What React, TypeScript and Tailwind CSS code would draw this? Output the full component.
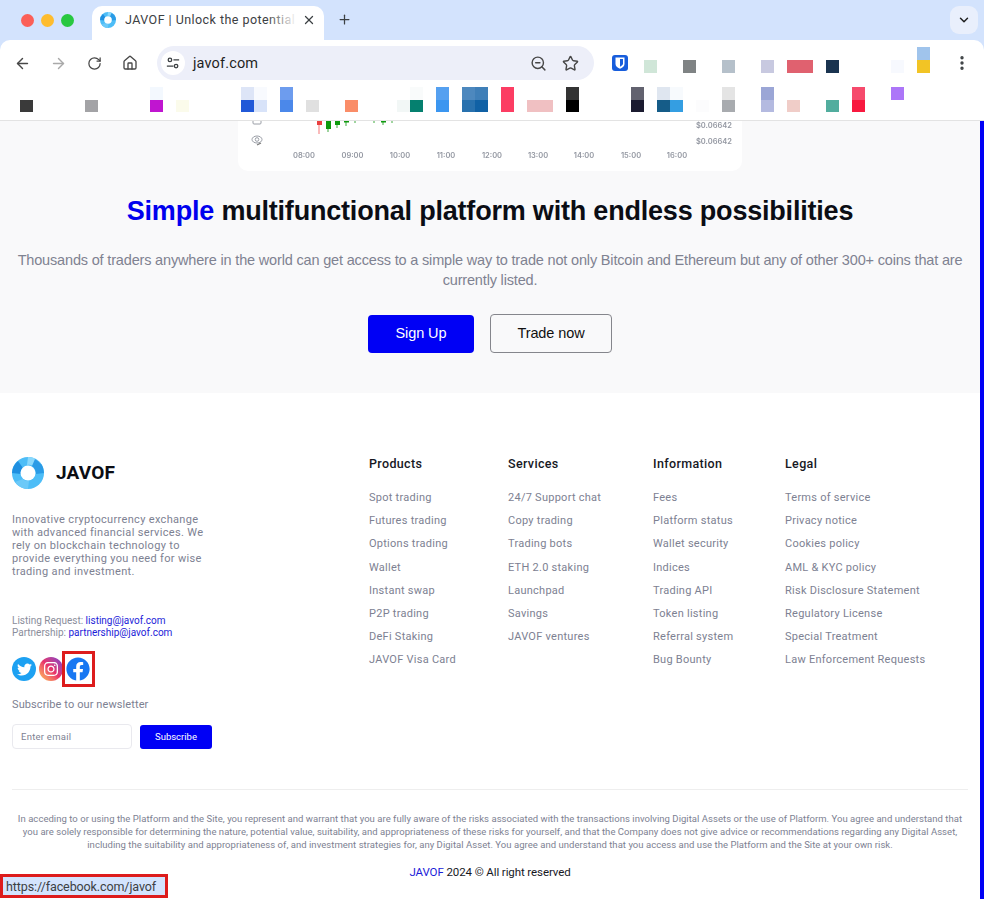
import { ArrowLeft, ArrowRight, RotateCw, House, ZoomOut, Star, ChevronDown, X, Plus, EllipsisVertical } from "lucide-react";
import { FaTwitter, FaFacebook, FaInstagram } from "react-icons/fa";

const extensionTiles = [
  { cls: "ml-[16px] w-[13px]", top: "", bottom: "bg-[#d0e6d8]" },
  { cls: "ml-[26px] w-[13px]", top: "", bottom: "bg-[#7f8384]" },
  { cls: "ml-[26px] w-[13px]", top: "", bottom: "bg-[#b5c0ca]" },
  { cls: "ml-[26px] w-[13px]", top: "", bottom: "bg-[#c8c9e0]" },
  { cls: "ml-[13px] w-[26px]", top: "", bottom: "bg-[#e0616f]" },
  { cls: "ml-[13px] w-[13px]", top: "", bottom: "bg-[#1a3450]" },
  { cls: "ml-[52px] w-[13px]", top: "", bottom: "bg-[#f7f9fe]" },
  { cls: "ml-[13px] w-[13px]", top: "bg-[#a0c4ec]", bottom: "bg-[#f2c425]" },
];

const bookmarkTiles = [
  { cls: "ml-[20px] w-[13px]", top: "", bottom: "bg-[#3a3a3a]" },
  { cls: "ml-[52px] w-[13px]", top: "", bottom: "bg-[#a3a3a6]" },
  { cls: "ml-[52px] w-[13px]", top: "bg-[#f3f8fe]", bottom: "bg-[#c015d0]" },
  { cls: "ml-[13px] w-[13px]", top: "", bottom: "bg-[#fbfbeb]" },
  { cls: "ml-[52px] w-[13px]", top: "bg-[#dde5f7]", bottom: "bg-[#2159d8]" },
  { cls: "w-[13px]", top: "bg-[#f8fafe]", bottom: "bg-[#d8e3f9]" },
  { cls: "ml-[13px] w-[13px]", top: "bg-[#6d9cee]", bottom: "bg-[#4b88ea]" },
  { cls: "ml-[13px] w-[13px]", top: "", bottom: "bg-[#e0e0e0]" },
  { cls: "ml-[26px] w-[13px]", top: "", bottom: "bg-[#fa8d68]" },
  { cls: "ml-[39px] w-[13px]", top: "", bottom: "bg-[#f2f7f6]" },
  { cls: "w-[13px]", top: "bg-[#f9fbfb]", bottom: "bg-[#05806f]" },
  { cls: "ml-[13px] w-[13px]", top: "bg-[#55a0f0]", bottom: "bg-[#3b96f0]" },
  { cls: "ml-[13px] w-[13px]", top: "bg-[#4d88be]", bottom: "bg-[#2871ae]" },
  { cls: "w-[13px]", top: "bg-[#3f7fb8]", bottom: "bg-[#1061a5]" },
  { cls: "ml-[13px] w-[13px]", top: "bg-[#fc3d63]", bottom: "bg-[#fc3d63]" },
  { cls: "ml-[13px] w-[26px]", top: "", bottom: "bg-[#f0c0c2]" },
  { cls: "ml-[13px] w-[13px]", top: "bg-[#333333]", bottom: "bg-black" },
  { cls: "ml-[52px] w-[13px]", top: "bg-[#62626f]", bottom: "bg-[#1b1b30]" },
  { cls: "ml-[13px] w-[13px]", top: "bg-[#dfe6f0]", bottom: "bg-[#155c88]" },
  { cls: "w-[13px]", top: "bg-[#f7fafd]", bottom: "bg-[#349ee2]" },
  { cls: "ml-[13px] w-[13px]", top: "", bottom: "bg-[#fcfcfd]" },
  { cls: "ml-[13px] w-[13px]", top: "bg-[#e4e4e4]", bottom: "bg-[#a8abaf]" },
  { cls: "ml-[26px] w-[13px]", top: "bg-[#9ba6d6]", bottom: "bg-[#b4bae0]" },
  { cls: "ml-[13px] w-[13px]", top: "", bottom: "bg-[#f0cdc8]" },
  { cls: "ml-[26px] w-[13px]", top: "", bottom: "bg-[#52ad9e]" },
  { cls: "ml-[13px] w-[13px]", top: "bg-[#f64a6c]", bottom: "bg-[#f8193f]" },
  { cls: "ml-[26px] w-[13px]", top: "bg-[#ac76f8]", bottom: "" },
];

const footerColumns = [
  {
    title: "Products",
    width: "w-[139px]",
    links: ["Spot trading", "Futures trading", "Options trading", "Wallet", "Instant swap", "P2P trading", "DeFi Staking", "JAVOF Visa Card"],
  },
  {
    title: "Services",
    width: "w-[145px]",
    links: ["24/7 Support chat", "Copy trading", "Trading bots", "ETH 2.0 staking", "Launchpad", "Savings", "JAVOF ventures"],
  },
  {
    title: "Information",
    width: "w-[132px]",
    links: ["Fees", "Platform status", "Wallet security", "Indices", "Trading API", "Token listing", "Referral system", "Bug Bounty"],
  },
  {
    title: "Legal",
    width: "w-[183px]",
    links: ["Terms of service", "Privacy notice", "Cookies policy", "AML & KYC policy", "Risk Disclosure Statement", "Regulatory License", "Special Treatment", "Law Enforcement Requests"],
  },
];

function Tile({ tile, height }: { tile: { cls: string; top: string; bottom: string }; height: string }) {
  return (
    <div className={`flex shrink-0 flex-col ${tile.cls}`}>
      <div className={`${height} ${tile.top}`} />
      <div className={`${height} ${tile.bottom}`} />
    </div>
  );
}

function JavofLogo({ className }: { className: string }) {
  return (
    <svg viewBox="0 0 32 32" className={className}>
      <circle cx="16" cy="16" r="16" fill="#4dbdf7" />
      <path d="M16 0a16 16 0 0 1 14 8l-7 3c-2-3-5-4-8-3z" fill="#8ad8fc" />
      <path d="M23 2a16 16 0 0 1 9 14l-8 1c0-3-1-6-4-8z" fill="#2a9be6" />
      <path d="M0 16a16 16 0 0 1 6-12l5 7c-2 2-3 4-2 6z" fill="#1f8fe0" />
      <path d="M16 32a16 16 0 0 1-13-7l8-3c2 2 3 2 6 2z" fill="#6cc9f8" />
      <circle cx="16" cy="16" r="7.500" fill="#fff" />
    </svg>
  );
}

function BrowserChrome() {
  return (
    <div className="h-[121px] shrink-0 border-b border-[#e3e3e3] bg-[#d3e3fd]">
      <div className="flex h-[40px] items-end">
        <div className="mb-[13px] ml-[21px] flex gap-[7px]">
          <span className="h-[13px] w-[13px] rounded-full bg-[#fb5f57]" />
          <span className="h-[13px] w-[13px] rounded-full bg-[#febc2e]" />
          <span className="h-[13px] w-[13px] rounded-full bg-[#28c840]" />
        </div>
        <div className="relative ml-[18px] flex h-[34px] w-[232px] items-center rounded-t-[10px] bg-white pb-[6px] pl-[8px]">
          <JavofLogo className="h-[16px] w-[16px]" />
          <div className="relative ml-[9px] w-[172px] overflow-hidden whitespace-nowrap font-['Roboto',sans-serif] text-[12.5px] tracking-[0.45px] text-[#3c4043]">
            JAVOF | Unlock the potential of
            <div className="absolute inset-y-0 right-0 w-[30px] bg-gradient-to-r from-transparent to-white" />
          </div>
          <X className="ml-[5px] h-[14px] w-[14px] text-[#3c4043]" strokeWidth={2.2} />
        </div>
        <Plus className="mb-[13px] ml-[13px] h-[15px] w-[15px] text-[#3c4043]" strokeWidth={2} />
        <div className="mb-[6px] ml-auto mr-[6px] flex h-[28px] w-[28px] items-center justify-center rounded-[9px] bg-[#e9effc]">
          <ChevronDown className="h-[14px] w-[14px] text-[#1f1f1f]" strokeWidth={2.5} />
        </div>
      </div>
      <div className="h-[80px] rounded-t-[10px] bg-white">
        <div className="flex h-[46px] items-center pl-[4px]">
          <div className="flex h-[36px] w-[36px] items-center justify-center"><ArrowLeft className="h-[17px] w-[17px] text-[#474747]" strokeWidth={2} /></div>
          <div className="flex h-[36px] w-[36px] items-center justify-center"><ArrowRight className="h-[17px] w-[17px] text-[#a9a9a9]" strokeWidth={2} /></div>
          <div className="flex h-[36px] w-[36px] items-center justify-center"><RotateCw className="h-[15px] w-[15px] text-[#474747]" strokeWidth={2} /></div>
          <div className="flex h-[36px] w-[36px] items-center justify-center"><House className="h-[16px] w-[16px] text-[#474747]" strokeWidth={2} /></div>
          <div className="ml-[9px] flex h-[34px] w-[437px] items-center rounded-full bg-[#edeff9] pl-[4px] pr-[15px]">
            <div className="flex h-[24px] w-[24px] items-center justify-center rounded-full bg-white">
              <svg viewBox="0 0 16 16" className="h-[14px] w-[14px]" fill="none" stroke="#3c4043" strokeWidth="1.5">
                <circle cx="4.5" cy="4.5" r="2" />
                <path d="M8.5 4.5H15M1 11.5h7.5" />
                <circle cx="11.5" cy="11.5" r="2" />
              </svg>
            </div>
            <span className="ml-[8px] pt-[1px] font-['Roboto',sans-serif] text-[14.5px] tracking-[0.15px] text-[#1f1f1f]">javof.com</span>
            <ZoomOut className="ml-auto h-[17px] w-[17px] text-[#474747]" strokeWidth={2} />
            <Star className="ml-[15px] h-[17px] w-[17px] text-[#474747]" strokeWidth={2} />
          </div>
          <svg viewBox="0 0 16 16" className="ml-[18px] h-[16px] w-[16px] shrink-0">
            <rect width="16" height="16" rx="3" fill="#175ddc" />
            <path d="M3.5 2.5h9v6.5c0 2.5-2.5 3.8-4.5 4.7C6 12.8 3.5 11.500 3.500 9z" fill="#fff" />
            <path d="M8 4v7.800c1.500-.8 3-1.700 3-3.200V4z" fill="#175ddc" />
          </svg>
          <div className="flex self-start pt-[7px]">
            {extensionTiles.map((tile, i) => (
              <Tile key={i} tile={tile} height="h-[13px]" />
            ))}
          </div>
          <EllipsisVertical className="ml-[23px] h-[18px] w-[18px] text-[#3c4043]" strokeWidth={2.5} />
        </div>
        <div className="flex pt-[1px]">
          {bookmarkTiles.map((tile, i) => (
            <Tile key={i} tile={tile} height="h-[12.5px]" />
          ))}
        </div>
      </div>
    </div>
  );
}

function ChartPeek() {
  return (
    <div className="mx-auto h-[50px] w-[504px] overflow-hidden rounded-b-[10px] bg-white">
      <svg viewBox="0 0 504 50" className="h-[50px] w-[504px] blur-[0.3px]">
        <path d="M81 0v13" stroke="#f9a5a5" strokeWidth="1.500" />
        <rect x="79" y="0" width="5" height="4" fill="#ea3f3f" />
        <path d="M90 0v11M99 0v7M108 0v5M117 0v2M136 0v2M145 0v4M154 0v2" stroke="#3fa93f" strokeWidth="1" />
        <rect x="88" y="0" width="5" height="8" fill="#0d9a0d" />
        <rect x="97" y="0" width="5" height="4" fill="#0d9a0d" />
        <rect x="106" y="0" width="5" height="1.500" fill="#0d9a0d" />
        <rect x="143" y="0" width="5" height="1.500" fill="#0d9a0d" />
        <ellipse cx="19" cy="18.500" rx="5" ry="3.500" fill="none" stroke="#9a9ea6" strokeWidth="1" />
        <circle cx="19" cy="18.500" r="1.800" fill="none" stroke="#9a9ea6" strokeWidth="1" />
        <path d="M19 24l4-2" stroke="#777" strokeWidth="1.200" />
        <rect x="15" y="-4" width="8" height="7" rx="1" fill="none" stroke="#9a9ea6" strokeWidth="1" />
        <g fontFamily="Inter, sans-serif" fontSize="7.500" fontWeight="600" fill="#9498a2" textAnchor="middle">
          <text x="66" y="37">08:00</text>
          <text x="114.500" y="37">09:00</text>
          <text x="162" y="37">10:00</text>
          <text x="208" y="37">11:00</text>
          <text x="254" y="37">12:00</text>
          <text x="300" y="37">13:00</text>
          <text x="346" y="37">14:00</text>
          <text x="393" y="37">15:00</text>
          <text x="439" y="37">16:00</text>
          <text x="494" y="7" textAnchor="end">$0.06642</text>
          <text x="494" y="23" textAnchor="end">$0.06642</text>
        </g>
      </svg>
    </div>
  );
}

function Hero() {
  return (
    <section className="h-[272px] shrink-0 bg-[#f9f9fa] font-['Liberation_Sans',sans-serif]">
      <ChartPeek />
      <h1 className="mt-[22px] text-center text-[27px] font-bold leading-[36px] tracking-[-0.2px] text-[#0b0d14]">
        <span className="text-[#0000ee]">Simple</span> multifunctional platform with endless possibilities
      </h1>
      <p className="mx-auto mt-[21px] w-[960px] text-center text-[14.5px] leading-[20px] tracking-[-0.17px] text-[#7f8291]">
        Thousands of traders anywhere in the world can get access to a simple way to trade not only Bitcoin and Ethereum but any of other 300+ coins that are currently listed.
      </p>
      <div className="mt-[24px] flex items-center justify-center gap-[16px]">
        <button className="h-[38px] w-[106px] rounded-[4px] bg-[#0000f5] text-[14.5px] tracking-[-0.1px] text-white">Sign Up</button>
        <button className="h-[39px] w-[122px] rounded-[4px] border border-[#85868c] text-[14.5px] tracking-[-0.1px] text-[#111]">Trade now</button>
      </div>
    </section>
  );
}

function Footer() {
  return (
    <footer className="relative flex-1 bg-white px-[12px] font-['Roboto',sans-serif]">
      <div className="flex border-b border-[#eeeeee] pb-[40px] pt-[64px]">
        <div className="w-[357px] shrink-0">
          <div className="flex items-center gap-[12px]">
            <JavofLogo className="h-[32px] w-[32px]" />
            <span className="text-[19px] font-bold tracking-[0.2px] text-[#0b0d14]">JAVOF</span>
          </div>
          <p className="mt-[24px] w-[200px] text-[11px] leading-[13px] tracking-[0.33px] text-[#7d8192]">
            Innovative cryptocurrency exchange with advanced financial services. We rely on blockchain technology to provide everything you need for wise trading and investment.
          </p>
          <div className="mt-[37px] text-[10px] leading-[12px] text-[#8a8d9b]">
            <div>Listing Request: <a className="text-[#1c1cd8]">listing@javof.com</a></div>
            <div>Partnership: <a className="text-[#1c1cd8]">partnership@javof.com</a></div>
          </div>
          <div className="mt-[18px] flex gap-[3px]">
            <div className="flex h-[24px] w-[24px] items-center justify-center rounded-full bg-[#1da1f2]">
              <FaTwitter className="h-[15px] w-[15px] text-white" />
            </div>
            <div className="flex h-[24px] w-[24px] items-center justify-center rounded-full bg-gradient-to-tr from-[#fdc04d] via-[#e8306a] to-[#7b2fd0]">
              <FaInstagram className="h-[16px] w-[16px] text-white" />
            </div>
            <div className="relative h-[24px] w-[24px]">
              <div className="absolute left-[3px] top-[3px] h-[18px] w-[18px] rounded-full bg-white" />
              <FaFacebook className="relative h-[24px] w-[24px] text-[#1877f2]" />
              <div className="absolute -left-[4px] -top-[6px] h-[36px] w-[33px] border-[3px] border-[#dd1c1c]" />
            </div>
          </div>
          <div className="mt-[17px] text-[11px] leading-[14px] tracking-[0.1px] text-[#7d8192]">Subscribe to our newsletter</div>
          <div className="mt-[12px] flex gap-[8px]">
            <input
              placeholder="Enter email"
              className="h-[25px] w-[120px] rounded-[4px] border border-[#e9e9ee] px-[8px] text-[9.500px] tracking-[0.25px] outline-none placeholder:text-[#7d8192]"
            />
            <button className="mt-[1px] h-[24px] w-[72px] rounded-[3px] bg-[#0000f5] text-[9.500px] text-white">Subscribe</button>
          </div>
        </div>
        {footerColumns.map((col) => (
          <div key={col.title} className={`shrink-0 ${col.width}`}>
            <h3 className="text-[12.500px] font-medium leading-[14px] tracking-[0.35px] text-[#17181f]">{col.title}</h3>
            <ul className="mt-[20px] flex flex-col gap-[9.200px]">
              {col.links.map((link) => (
                <li key={link} className="text-[11px] leading-[14px] tracking-[0.26px] text-[#7d8192]">{link}</li>
              ))}
            </ul>
          </div>
        ))}
      </div>
      <p className="mx-auto mt-[22px] w-[950px] text-center text-[9.500px] leading-[13px] tracking-[0.04px] text-[#7d8192]">
        In acceding to or using the Platform and the Site, you represent and warrant that you are fully aware of the risks associated with the transactions involving Digital Assets or the use of Platform. You agree and understand that you are solely responsible for determining the nature, potential value, suitability, and appropriateness of these risks for yourself, and that the Company does not give advice or recommendations regarding any Digital Asset, including the suitability and appropriateness of, and investment strategies for, any Digital Asset. You agree and understand that you access and use the Platform and the Site at your own risk.
      </p>
      <div className="mt-[14px] text-center text-[11.500px] leading-[14px] tracking-[-0.1px] text-[#17181f]">
        <span className="text-[#1c1cd8]">JAVOF</span> 2024 © All right reserved
      </div>
    </footer>
  );
}

export default function App() {
  return (
    <div className="relative flex h-[899px] w-[984px] flex-col overflow-hidden bg-white">
      <BrowserChrome />
      <div className="flex min-h-0 flex-1">
        <main className="flex w-[980px] flex-col">
          <Hero />
          <Footer />
        </main>
        <div className="w-[4px] bg-[#0000f5]" />
      </div>
      {/* link preview bubble at the bottom left of the window */}
      <div className="absolute bottom-[1px] left-0 flex h-[24px] w-[168px] items-center border-[3px] border-[#dd1c1c] bg-[#d3e3fd] pl-[3px] pt-[2px] font-['Roboto',sans-serif] text-[12.5px] tracking-[-0.1px] text-[#3c4043]">
        https://facebook.com/javof
      </div>
    </div>
  );
}
